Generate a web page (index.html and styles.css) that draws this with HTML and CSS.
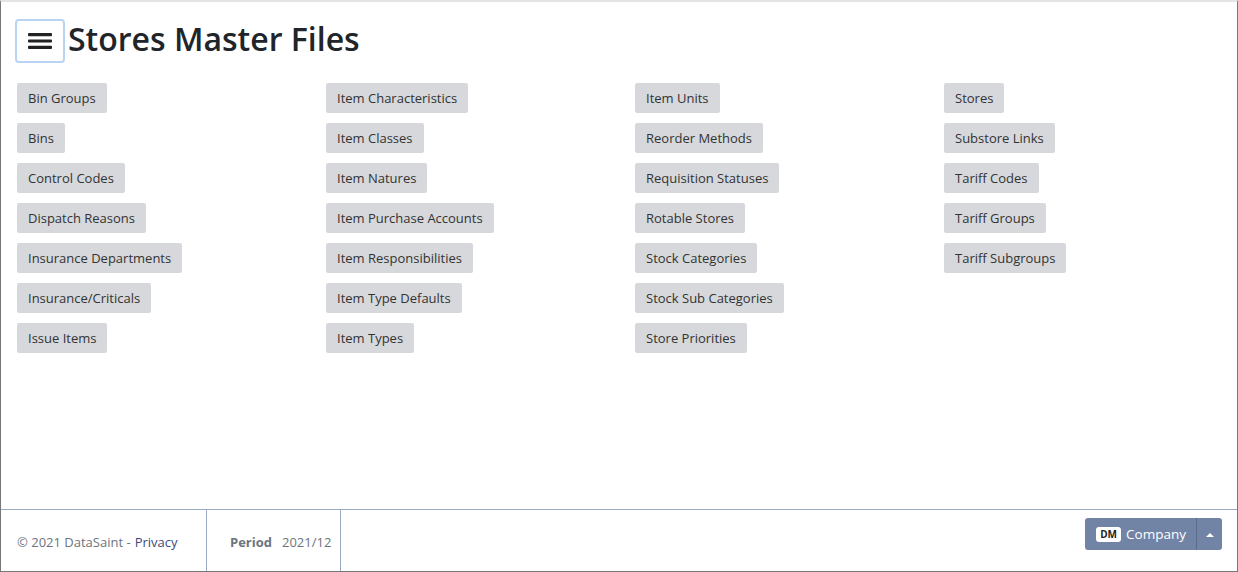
FILE: index.html
```html
<!DOCTYPE html>
<html lang="en">
<head>
    <meta charset="UTF-8">
    <title>Stores Master Files</title>
    <link rel="stylesheet" href="styles.css">
</head>
<body>
    <div class="page">
        <header class="page-head">
            <button class="menu-btn" aria-label="Menu">
                <svg width="24" height="20" viewBox="0 0 24 20">
                    <rect x="0" y="2" width="24" height="3.2" rx="1" fill="#222"/>
                    <rect x="0" y="8.4" width="24" height="3.2" rx="1" fill="#222"/>
                    <rect x="0" y="14.8" width="24" height="3.2" rx="1" fill="#222"/>
                </svg>
            </button>
            <h1>Stores Master Files</h1>
        </header>

        <main class="links">
            <div class="link-col">
                <a href="#">Bin Groups</a>
                <a href="#">Bins</a>
                <a href="#">Control Codes</a>
                <a href="#">Dispatch Reasons</a>
                <a href="#">Insurance Departments</a>
                <a href="#">Insurance/Criticals</a>
                <a href="#">Issue Items</a>
            </div>
            <div class="link-col">
                <a href="#">Item Characteristics</a>
                <a href="#">Item Classes</a>
                <a href="#">Item Natures</a>
                <a href="#">Item Purchase Accounts</a>
                <a href="#">Item Responsibilities</a>
                <a href="#">Item Type Defaults</a>
                <a href="#">Item Types</a>
            </div>
            <div class="link-col">
                <a href="#">Item Units</a>
                <a href="#">Reorder Methods</a>
                <a href="#">Requisition Statuses</a>
                <a href="#">Rotable Stores</a>
                <a href="#">Stock Categories</a>
                <a href="#">Stock Sub Categories</a>
                <a href="#">Store Priorities</a>
            </div>
            <div class="link-col">
                <a href="#">Stores</a>
                <a href="#">Substore Links</a>
                <a href="#">Tariff Codes</a>
                <a href="#">Tariff Groups</a>
                <a href="#">Tariff Subgroups</a>
            </div>
        </main>

        <footer class="page-foot">
            <div class="foot-cell copy">&copy; 2021 DataSaint - <a href="#">Privacy</a></div>
            <div class="foot-cell period"><b>Period</b> 2021/12</div>
            <div class="foot-spacer"></div>
            <div class="company">
                <button class="company-btn"><span class="badge">DM</span> Company</button>
                <button class="company-caret" aria-label="Toggle">
                    <svg width="8" height="5" viewBox="0 0 8 5"><path d="M0 5 L4 1 L8 5 Z" fill="#fff"/></svg>
                </button>
            </div>
        </footer>
    </div>
</body>
</html>
```

FILE: styles.css
```css
* {
    margin: 0;
    padding: 0;
    box-sizing: border-box;
}

body {
    font-family: 'Open Sans', 'Noto Sans', sans-serif;
    font-size: 13px;
    color: #333;
    background: #fff;
}

.page {
    height: 572px;
    display: flex;
    flex-direction: column;
    border: 1px solid #777;
    border-top: 2px solid #e4e4e4;
}

.page-head {
    display: flex;
    align-items: center;
    gap: 3px;
    padding: 17px 14px 0;
}

.menu-btn {
    width: 50px;
    height: 44px;
    border: 2px solid #b9d3f5;
    border-radius: 4px;
    background: #fff;
    display: flex;
    align-items: center;
    justify-content: center;
}

.page-head h1 {
    font-size: 32px;
    font-weight: 600;
    line-height: 38px;
    margin-top: -5px;
    color: #212529;
}

.links {
    flex: 1;
    display: grid;
    grid-template-columns: repeat(4, 1fr);
    padding-top: 20px;
}

.link-col {
    display: flex;
    flex-direction: column;
    align-items: flex-start;
    gap: 10px;
    padding-left: 16px;
}

.link-col a {
    display: block;
    height: 30px;
    line-height: 30px;
    padding: 0 11px;
    background: #d6d8db;
    border-radius: 2px;
    color: #333;
    text-decoration: none;
}

.page-foot {
    height: 62px;
    display: flex;
    align-items: stretch;
    border-top: 1px solid #9aa9c4;
    color: #6c757d;
}

.foot-cell {
    display: flex;
    align-items: center;
    padding: 2px 16px 0;
    border-right: 1px solid #9aa9c4;
}

.copy {
    width: 206px;
}

.copy a {
    color: #3b4b7c;
    text-decoration: none;
    margin-left: 4px;
}

.period {
    width: 134px;
    padding-left: 23px;
    gap: 10px;
}

.period b {
    font-weight: 700;
}

.foot-spacer {
    flex: 1;
}

.company {
    display: flex;
    align-self: flex-start;
    margin: 8px 15px 0 0;
    height: 32px;
}

.company-btn,
.company-caret {
    background: #7184a6;
    color: #fff;
    border: none;
    font: inherit;
    font-size: 13.5px;
}

.company-btn {
    border-radius: 3px 0 0 3px;
    padding: 0 10px 0 11px;
    display: flex;
    align-items: center;
    gap: 5px;
    border-right: 1px solid #5b6d8e;
}

.badge {
    background: #fff;
    color: #222;
    font-size: 10px;
    font-weight: 700;
    padding: 1px 4px;
    border-radius: 3px;
    line-height: 13px;
}

.company-caret {
    width: 25px;
    border-radius: 0 3px 3px 0;
    display: flex;
    align-items: center;
    justify-content: center;
}
```
